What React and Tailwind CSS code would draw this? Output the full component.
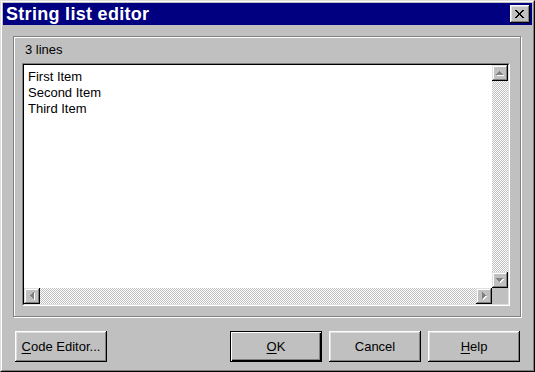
import React from "react";

const font = { fontFamily: '"Liberation Sans", Arial, sans-serif' };

// classic 3d bevels
const raised =
  "shadow-[inset_-1px_-1px_#000,inset_1px_1px_#fff,inset_-2px_-2px_#808080,inset_2px_2px_#dfdfdf]";
const scrollBtn =
  "shadow-[inset_-1px_-1px_#000,inset_1px_1px_#dfdfdf,inset_-2px_-2px_#808080,inset_2px_2px_#fff]";
const checker =
  "bg-[conic-gradient(#fff_25%,#c0c0c0_0_50%,#fff_0_75%,#c0c0c0_0)] bg-[length:2px_2px]";

// greyed (disabled) arrow: grey shape with white shadow one pixel off
const Arrow = ({ dir }) => {
  const shapes = {
    up: "M3 0h1v1h1v1h1v1h1v1H0V3h1V2h1V1h1z",
    down: "M0 0h7v1H6v1H5v1H4v1H3V3H2V2H1V1H0z",
    left: "M3 0h1v7H3V6H2V5H1V4H0V3h1V2h1V1h1z",
    right: "M0 0h1v1h1v1h1v1h1v1H3v1H2v1H1v1H0z",
  };
  const vert = dir === "up" || dir === "down";
  return (
    <svg width={vert ? 8 : 5} height={vert ? 5 : 8} shapeRendering="crispEdges">
      <path d={shapes[dir]} fill="#fff" transform="translate(1 1)" />
      <path d={shapes[dir]} fill="#808080" />
    </svg>
  );
};

const ScrollButton = ({ dir }) => (
  <div className={`w-4 h-4 bg-[#c0c0c0] flex items-center justify-center ${scrollBtn}`}>
    <Arrow dir={dir} />
  </div>
);

const Button = ({ children, isDefault }) => (
  <div
    className={`w-[92px] h-[31px] bg-[#c0c0c0] flex items-center justify-center text-[13px] text-black ${
      isDefault
        ? "border border-black shadow-[inset_1px_1px_#fff,inset_-1px_-1px_#000,inset_-2px_-2px_#808080]"
        : raised
    }`}
  >
    {children}
  </div>
);

// pixel rows of the close glyph (x offsets of 2px-wide runs)
const closeRows = [
  [0, 7],
  [1, 6],
  [2, 5],
  [3, 4],
  [3, 4],
  [2, 5],
  [1, 6],
  [0, 7],
];

const lines = ["First Item", "Second Item", "Third Item"];

export default function App() {
  return (
    <div style={font} className="w-[535px] h-[372px] bg-[#c0c0c0]">
      {/* window frame */}
      <div className="w-full h-full border border-t-[#dfdfdf] border-l-[#dfdfdf] border-r-black border-b-black">
        <div className="w-full h-full border border-t-white border-l-white border-r-[#808080] border-b-[#808080] p-px flex flex-col">
          {/* title bar */}
          <div className="h-[22px] bg-[#000080] flex items-center justify-between pl-[3px] pr-[2px]">
            <span className="text-white font-bold text-[18px] leading-none tracking-[0.3px]">
              String list editor
            </span>
            <div className={`w-5 h-[18px] bg-[#c0c0c0] flex items-center justify-center ${raised}`}>
              <svg width="10" height="8" shapeRendering="crispEdges">
                {closeRows.map(([a, b], y) => (
                  <g key={y}>
                    <rect x={a} y={y} width="2" height="1" fill="#000" />
                    <rect x={b} y={y} width="2" height="1" fill="#000" />
                  </g>
                ))}
              </svg>
            </div>
          </div>

          {/* body */}
          <div className="flex-1 flex flex-col pt-[11px] px-[10px] pb-[7px]">
            {/* group box */}
            <div className="h-[281px] w-[508px] border border-[#808080] shadow-[inset_1px_1px_#fff,1px_1px_#fff] px-[8px] pt-[5px] flex flex-col">
              <div className="text-[13px] leading-4 text-black pl-[3px]">3 lines</div>
              {/* memo */}
              <div className="mt-[5px] w-[488px] h-[243px] border border-t-[#808080] border-l-[#808080] border-r-white border-b-white">
                <div className="w-full h-full border border-t-black border-l-black border-r-[#dfdfdf] border-b-[#dfdfdf] grid grid-cols-[1fr_16px] grid-rows-[1fr_16px] bg-white">
                  <div className="pt-1 pl-1 text-[13px] leading-4 text-black">
                    {lines.map((l) => (
                      <div key={l}>{l}</div>
                    ))}
                  </div>
                  <div className={`flex flex-col justify-between ${checker}`}>
                    <ScrollButton dir="up" />
                    <ScrollButton dir="down" />
                  </div>
                  <div className={`flex justify-between ${checker}`}>
                    <ScrollButton dir="left" />
                    <ScrollButton dir="right" />
                  </div>
                  <div className="bg-[#c0c0c0]" />
                </div>
              </div>
            </div>

            {/* buttons */}
            <div className="mt-auto flex items-center">
              <div className="pl-[2px]">
                <Button>
                  <span className="underline underline-offset-2">C</span>ode Editor...
                </Button>
              </div>
              <div className="ml-auto flex gap-[7px] pr-[2px]">
                <Button isDefault>
                  <span className="underline underline-offset-2">O</span>K
                </Button>
                <Button>Cancel</Button>
                <Button>
                  <span className="underline underline-offset-2">H</span>elp
                </Button>
              </div>
            </div>
          </div>
        </div>
      </div>
    </div>
  );
}
